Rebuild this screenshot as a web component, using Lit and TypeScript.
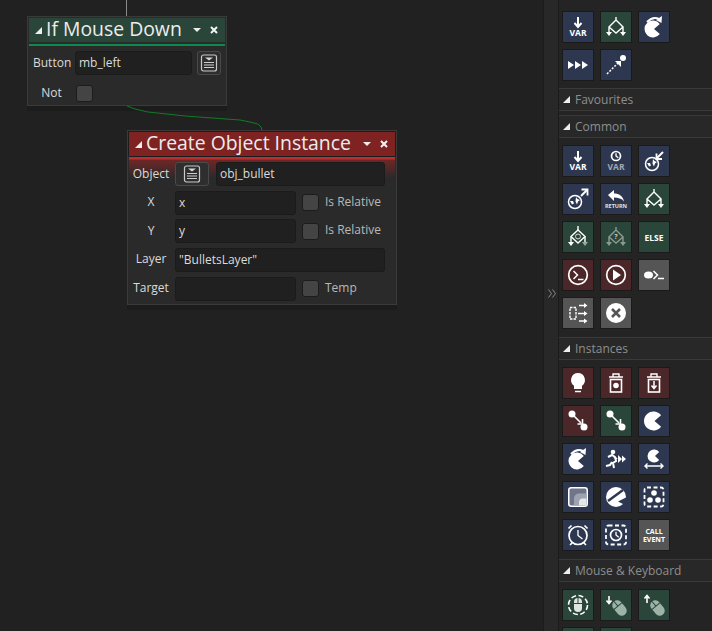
import { LitElement, html, css, svg } from "lit";
import { customElement } from "lit/decorators.js";

type Tone = "blue" | "green" | "red" | "grey";
type Tool = { tone: Tone; icon: any };

const W = "#fff";
const FONT = "Open Sans, sans-serif";

const fork = (c = W) => svg`
  <path d="M15 5v3M15 8l7 7-7 6-7-6zM8 15v5M22 15v5" fill="none" stroke="${c}" stroke-width="1.4"/>
  <path d="M5 20h6l-3 4zM19 20h6l-3 4z" fill="${c}"/>`;
const pac = (cx = 15, cy = 16, r = 9) => svg`
  <path d="M${cx + r * 0.8} ${cy - r * 0.6}A${r} ${r} 0 1 0 ${cx + r * 0.8} ${cy + r * 0.6}L${cx + 1} ${cy}z" fill="${W}"/>`;
const curved = svg`<path d="M8 10q6-6 12-3" fill="none" stroke="${W}" stroke-width="2"/><path d="M23 4l-.5 7-5.500-3z" fill="${W}"/>`;
const globe = (cx: number, cy: number) => svg`
  <circle cx="${cx}" cy="${cy}" r="6.500" fill="none" stroke="${W}" stroke-width="1.500"/>
  <path d="M${cx - 5} ${cy - 1}l3 0 1 2.500-2 1zM${cx + 1} ${cy - 5}l1.500 2 2.500 1-2 1.500-1 3-1.500-3z" fill="${W}"/>`;
const clock = (cx: number, cy: number, r: number) => svg`
  <circle cx="${cx}" cy="${cy}" r="${r}" fill="none" stroke="${W}" stroke-width="1.700"/>
  <path d="M${cx} ${cy - r * 0.6}V${cy}l${r * 0.5} ${r * 0.4}" fill="none" stroke="${W}" stroke-width="1.300"/>`;
const dots = svg`<circle cx="9" cy="8" r="3.500" fill="${W}"/><circle cx="21" cy="21" r="3.500" fill="${W}"/><path d="M11 10l7 7" stroke="${W}" stroke-width="1.600"/><path d="M19.500 13v5h-5" fill="none" stroke="${W}" stroke-width="1.600"/>`;
const label = (t: string, y: number, size: number, c = W) =>
  svg`<text x="15" y="${y}" text-anchor="middle" font-family="${FONT}" font-size="${size}" font-weight="700" fill="${c}">${t}</text>`;
const bin = (inner: any) => svg`
  <path d="M8 9h14M12 8.500V6h6v2.500" fill="none" stroke="${W}" stroke-width="1.400"/>
  <rect x="9.500" y="11.500" width="11" height="12.500" fill="none" stroke="${W}" stroke-width="1.600"/>${inner}`;
const mouse = (up: boolean) => svg`
  <path d="${up ? "M8 13V6M5.500 8.500L8 5.500l2.500 3" : "M8 6v7M5.500 10.500L8 13.500l2.500-3"}" fill="none" stroke="${W}" stroke-width="1.600"/>
  <g transform="rotate(-40 18.500 18)"><rect x="13.500" y="9.500" width="10" height="17" rx="5" fill="#9db3a8"/><path d="M13.500 15.500h10M18.500 9.500v6" stroke="#2a4539" stroke-width="1"/></g>`;

const varTool: Tool = {
  tone: "blue",
  icon: svg`<path d="M15 5v9M11.500 11l3.500 4 3.500-4" fill="none" stroke="${W}" stroke-width="2"/>${label("VAR", 24, 8.5)}`,
};
const swing: Tool = { tone: "blue", icon: svg`${curved}${pac(14, 17, 8.5)}` };

const top: Tool[] = [
  varTool,
  { tone: "green", icon: fork() },
  swing,
  { tone: "blue", icon: svg`<path d="M5 11l6 4-6 4zM12 11l6 4-6 4zM19 11l6 4-6 4z" fill="${W}"/>` },
  { tone: "blue", icon: svg`<path d="M6 24l11-11" stroke="${W}" stroke-width="1.500" stroke-dasharray="2 1.500"/><path d="M14 11h6v6z" fill="${W}"/><circle cx="22" cy="8" r="3" fill="${W}"/>` },
];

const common: Tool[] = [
  varTool,
  { tone: "blue", icon: svg`${clock(15, 10, 4.5)}${label("VAR", 24, 8.5, "#a2a8b2")}` },
  { tone: "blue", icon: svg`${globe(13, 18)}<path d="M24 6l-6 6" stroke="${W}" stroke-width="2"/><path d="M17.500 7.500v5.500h5.500" fill="none" stroke="${W}" stroke-width="1.800"/>` },
  { tone: "blue", icon: svg`${globe(12, 18)}<path d="M18 12l6-6" stroke="${W}" stroke-width="2"/><path d="M18.500 5.500h6v6" fill="none" stroke="${W}" stroke-width="1.800"/>` },
  { tone: "blue", icon: svg`<path d="M7 11l6-5v3.500c5 0 9 2.500 10 8-2-3-6-4-10-4V17z" fill="${W}"/>${label("RETURN", 24, 5.5, "#dfe2e8")}` },
  { tone: "green", icon: fork() },
  { tone: "green", icon: svg`<path d="M15 4v4M8 15v5M22 15v5" fill="none" stroke="${W}" stroke-width="1.400"/><path d="M15 8l7 6.500-7 6.500-7-6.500z" fill="none" stroke="${W}" stroke-width="1.400"/><circle cx="15" cy="14.500" r="2.500" fill="none" stroke="#cfd8d3"/><path d="M5 20h6l-3 4z" fill="${W}"/><path d="M19 20h6l-3 4z" fill="#9aa8a0"/>` },
  { tone: "green", icon: svg`${fork("#8a9a91")}${label("?", 17, 7, "#c4cdc8")}` },
  { tone: "green", icon: label("ELSE", 19, 8.5) },
  { tone: "red", icon: svg`<circle cx="15" cy="15" r="9.300" fill="none" stroke="${W}" stroke-width="1.700"/><path d="M10.500 11l4 4-4 4M15 19.500h5.500" fill="none" stroke="${W}" stroke-width="1.500"/>` },
  { tone: "red", icon: svg`<circle cx="15" cy="15" r="9.300" fill="none" stroke="${W}" stroke-width="1.700"/><path d="M12 9.500l8 5.500-8 5.500z" fill="${W}"/>` },
  { tone: "grey", icon: svg`<ellipse cx="9.500" cy="15" rx="4.500" ry="3.500" fill="${W}"/><path d="M14.500 11l4 4-4 4" fill="none" stroke="${W}" stroke-width="1.500"/><path d="M19 18.500h6" stroke="${W}" stroke-width="1.500"/>` },
  { tone: "grey", icon: svg`<path d="M7 9.500h6v11.500H7z" fill="none" stroke="${W}" stroke-width="1.400" stroke-dasharray="2.500 1"/><path d="M16 7.500h6M15 15.500h7M16 23h6" fill="none" stroke="${W}" stroke-width="1.400"/><path d="M21 5l3.500 2.500L21 10zM21 13l3.500 2.500L21 18zM21 20.500l3.500 2.500-3.500 2.500z" fill="${W}"/>` },
  { tone: "grey", icon: svg`<circle cx="15" cy="15" r="10" fill="${W}"/><path d="M11 11l8 8M19 11l-8 8" stroke="#555" stroke-width="2.500"/>` },
];

const instances: Tool[] = [
  { tone: "red", icon: svg`<path d="M15 5a7 7 0 0 0-4 12.700V21h8v-3.300A7 7 0 0 0 15 5z" fill="${W}"/><path d="M12 23.500h6" stroke="${W}" stroke-width="1.500"/>` },
  { tone: "red", icon: bin(svg`<circle cx="15" cy="17.500" r="2.800" fill="${W}"/>`) },
  { tone: "red", icon: bin(svg`<path d="M15 13v7M12.500 17.500l2.500 3 2.500-3" fill="none" stroke="${W}" stroke-width="1.500"/>`) },
  { tone: "red", icon: dots },
  { tone: "green", icon: dots },
  { tone: "blue", icon: pac(14.5, 15, 9.5) },
  swing,
  { tone: "blue", icon: svg`<circle cx="12" cy="8" r="2.300" fill="${W}"/><path d="M7 13l4-2 3 2 1 4-3 2 1 5M11 18l-2 3-4 1M13 13l3 2" fill="none" stroke="${W}" stroke-width="2"/><path d="M17 11l4 4-4 4zM21 11.500l4 3.500-4 3.500z" fill="${W}"/>` },
  { tone: "blue", icon: svg`${pac(15, 12, 6.5)}<path d="M6 22h18M8.500 19.500L6 22l2.500 2.500M21.500 19.500L24 22l-2.500 2.500" fill="none" stroke="${W}" stroke-width="1.400"/>` },
  { tone: "blue", icon: svg`<rect x="5.750" y="5.750" width="18.500" height="18.500" rx="2.500" fill="#6f7689" stroke="${W}" stroke-width="1.500"/><path d="M11 23.500v-7a5 5 0 0 1 5-5h7.500v12z" fill="#9ea3b0"/><path d="M16 23.500v-3a4 4 0 0 1 4-4h3.500v7z" fill="#e4e6ea"/>` },
  { tone: "blue", icon: svg`<circle cx="15" cy="15" r="10" fill="${W}"/><path d="M7 19L22 8" stroke="#2d3850" stroke-width="2.500"/><path d="M17 19.500l9-4.500v9z" fill="#2d3850"/>` },
  { tone: "blue", icon: svg`<rect x="5.500" y="5.500" width="19" height="19" rx="2.500" fill="none" stroke="${W}" stroke-width="1.800" stroke-dasharray="4 2.500"/><circle cx="15" cy="11" r="2.800" fill="${W}"/><circle cx="11" cy="18" r="2.800" fill="${W}"/><circle cx="19" cy="18" r="2.800" fill="${W}"/>` },
  { tone: "blue", icon: svg`${clock(15, 15.5, 9)}<path d="M5.500 8.500l3-3M24.500 8.500l-3-3M7 25l2.500-2.500M23 25l-2.500-2.500" stroke="${W}" stroke-width="1.700"/>` },
  { tone: "blue", icon: svg`<rect x="5" y="5.500" width="20" height="19" rx="2.500" fill="none" stroke="${W}" stroke-width="1.800" stroke-dasharray="4 2.500"/>${clock(15, 15, 5.5)}` },
  { tone: "grey", icon: svg`${label("CALL", 14, 7)}${label("EVENT", 21.5, 7)}` },
];

const mouseKeys: Tool[] = [
  { tone: "green", icon: svg`<circle cx="15" cy="15" r="9.500" fill="none" stroke="${W}" stroke-width="1.600" stroke-dasharray="5 2.500"/><rect x="11" y="8" width="8" height="14" rx="4" fill="#dfe5e2"/><path d="M11 13.500h8M15 8v5.500" stroke="#2a4539"/>` },
  { tone: "green", icon: mouse(false) },
  { tone: "green", icon: mouse(true) },
  { tone: "green", icon: svg`` },
  { tone: "green", icon: svg`` },
];

const listIcon = svg`
  <rect x="2.500" y="2" width="15" height="16" rx="2" fill="none" stroke="#c9c9c9" stroke-width="1.200"/>
  <path d="M6 4.500h8l-4 3z" fill="#d8d8d8"/>
  <path d="M5 9.500h10M5 12h10M5 14.500h10" stroke="#d0d0d0" stroke-width="1.200"/>`;

@customElement("app-root")
export class AppRoot extends LitElement {
  static styles = css`
    :host {
      display: flex;
      width: 712px;
      height: 631px;
      overflow: hidden;
      background: #212121;
      font-family: "Open Sans", sans-serif;
    }
    .canvas {
      position: relative;
      flex: 1;
    }
    .wires {
      position: absolute;
      inset: 0;
      width: 100%;
      height: 100%;
      pointer-events: none;
    }
    .node {
      position: absolute;
      box-sizing: border-box;
      background: #2a2a2a;
      border: 1px solid #3a3a3a;
      box-shadow: 0 5px 0 #1c1c1c;
      color: #d8d8d8;
      font-size: 12px;
    }
    .node.mouse {
      left: 27px;
      top: 16px;
      width: 200px;
      height: 90px;
    }
    .node.create {
      left: 127px;
      top: 130px;
      width: 270px;
      height: 175px;
    }
    .head {
      display: flex;
      align-items: center;
      height: 24px;
      margin: 1px 1px 0;
      padding-left: 6px;
      color: #ececec;
      font-size: 19.4px;
      white-space: nowrap;
    }
    .mouse .head {
      background: #2a4539;
    }
    .create .head {
      box-sizing: border-box;
      height: 25px;
      margin: 0;
      padding-left: 6px;
      background: #7f2222;
      border: 1px solid #1c1c1c;
      border-bottom: 0;
    }
    .bar {
      height: 2px;
      margin: 2px 1px 0;
      background: #0d8a4e;
    }
    .create .bar {
      height: 22px;
      margin: 0 1px -21px;
      background: linear-gradient(#1c1c1c 0, #1c1c1c 1px, #b83030 1px, #b83030 3px, #6f2626 4px, #2a2a2a 100%);
    }
    .tri {
      width: 0;
      height: 0;
      margin-right: 5px;
      border-left: 7px solid transparent;
      border-bottom: 7px solid #eee;
    }
    .head .tri {
      margin-right: 4px;
    }
    .title {
      flex: 1;
      margin-top: -3px;
    }
    .menu {
      width: 0;
      height: 0;
      margin-right: 9px;
      border: 4.5px solid transparent;
      border-top: 4px solid #eee;
      border-bottom: 0;
    }
    .close {
      display: block;
      margin-right: 7px;
    }
    .form {
      position: relative;
      display: grid;
      grid-auto-rows: 24px;
      align-items: center;
    }
    .mouse .form {
      grid-template-columns: 37px 117px 24px;
      column-gap: 5px;
      row-gap: 6px;
      padding: 5px 0 0 5px;
    }
    .create .form {
      grid-template-columns: 38px 121px 84px;
      column-gap: 5px;
      row-gap: 4.67px;
      padding: 5px 0 0 4px;
    }
    .label {
      margin-top: -2px;
      text-align: center;
      color: #dadada;
    }
    .input {
      box-sizing: border-box;
      height: 24px;
      line-height: 22px;
      padding-left: 3px;
      background: #202020;
      border: 1px solid #1b1b1b;
      border-radius: 3px;
      color: #dcdcdc;
    }
    .wide {
      grid-column: span 2;
    }
    .objrow {
      display: grid;
      grid-template-columns: 34px 1fr;
      gap: 7px;
    }
    .pick {
      box-sizing: border-box;
      display: flex;
      align-items: center;
      justify-content: center;
      height: 24px;
      background: #2e2e2e;
      border: 1px solid #4a4a4a;
      border-radius: 3px;
    }
    .check {
      display: flex;
      align-items: center;
      gap: 6px;
      color: #b8b8b8;
    }
    .check span:last-child {
      margin-top: -3px;
    }
    .box {
      box-sizing: border-box;
      flex: none;
      width: 17px;
      height: 17px;
      margin-left: 1px;
      background: #444;
      border: 1px solid #1c1c1c;
      border-radius: 3px;
    }
    .side {
      display: flex;
      flex: none;
      width: 169px;
    }
    .grip {
      box-sizing: border-box;
      flex: none;
      width: 16px;
      padding: 289px 0 0 4px;
      background: #282828;
      border-left: 1px solid #1b1b1b;
      border-right: 1px solid #1b1b1b;
    }
    .grip svg {
      display: block;
    }
    .panel {
      flex: 1;
      min-width: 0;
      background: #242424;
    }
    .tools {
      display: grid;
      grid-template-columns: repeat(3, 30px);
      gap: 8px;
      padding: 8px 4px 9px;
    }
    .tools.first {
      padding-top: 12px;
      padding-bottom: 8px;
    }
    .section {
      display: flex;
      align-items: center;
      height: 21px;
      padding-left: 4px;
      border-top: 1px solid #3a3a3a;
      border-bottom: 1px solid #3a3a3a;
      background: #282828;
      color: #8e8e8e;
      font-size: 12px;
    }
    .gap {
      height: 4px;
    }
    .tool {
      width: 30px;
      height: 30px;
      box-shadow: 0 0 0 1px #1a1a1a;
    }
    .tool svg {
      display: block;
      width: 30px;
      height: 30px;
    }
    .blue {
      background: #2d3850;
    }
    .green {
      background: #2a4539;
    }
    .red {
      background: #4c2729;
    }
    .grey {
      background: #555;
    }
  `;

  private tools(list: Tool[], first = false) {
    return html`<div class="tools ${first ? "first" : ""}">
      ${list.map(
        (t) => html`<div class="tool ${t.tone}"><svg viewBox="0 0 30 30">${t.icon}</svg></div>`
      )}
    </div>`;
  }

  private section(name: string) {
    return html`<div class="section"><span class="tri"></span>${name}</div>`;
  }

  private head(title: string) {
    return html`<div class="head">
      <span class="tri"></span><span class="title">${title}</span>
      <span class="menu"></span>
      <svg class="close" width="8" height="8" viewBox="0 0 8 8"><path d="M1 1l6 6M7 1L1 7" stroke="#f4f4f4" stroke-width="2"/></svg>
    </div>`;
  }

  private pick() {
    return html`<div class="pick"><svg width="20" height="20" viewBox="0 0 20 20">${listIcon}</svg></div>`;
  }

  private check(text: string) {
    return html`<div class="check"><span class="box"></span><span>${text}</span></div>`;
  }

  render() {
    return html`
      <div class="canvas">
        <div class="node mouse">
          ${this.head("If Mouse Down")}
          <div class="bar"></div>
          <div class="form">
            <span class="label">Button</span>
            <div class="input">mb_left</div>
            ${this.pick()}
            <span class="label">Not</span>
            <div class="box"></div>
          </div>
        </div>
        <div class="node create">
          ${this.head("Create Object Instance")}
          <div class="bar"></div>
          <div class="form">
            <span class="label">Object</span>
            <div class="objrow wide">
              ${this.pick()}
              <div class="input">obj_bullet</div>
            </div>
            <span class="label">X</span>
            <div class="input">x</div>
            ${this.check("Is Relative")}
            <span class="label">Y</span>
            <div class="input">y</div>
            ${this.check("Is Relative")}
            <span class="label">Layer</span>
            <div class="input wide">"BulletsLayer"</div>
            <span class="label">Target</span>
            <div class="input"></div>
            ${this.check("Temp")}
          </div>
        </div>
        <svg class="wires" viewBox="0 0 543 631">
          <path d="M126.500 0v16" stroke="#8a8a8a" fill="none"/>
          <path d="M127 106l8 3 13 3 37 4 55 4 10 2 8 2 3 3 1 3" stroke="#137a25" fill="none"/>
        </svg>
      </div>
      <div class="side">
        <div class="grip">
          <svg width="8" height="9" viewBox="0 0 8 9"><path d="M.5.5l3 4-3 4M4.500.5l3 4-3 4" fill="none" stroke="#888"/></svg>
        </div>
        <div class="panel">
          ${this.tools(top, true)}
          ${this.section("Favourites")}
          <div class="gap"></div>
          ${this.section("Common")}
          ${this.tools(common)}
          ${this.section("Instances")}
          ${this.tools(instances)}
          ${this.section("Mouse & Keyboard")}
          ${this.tools(mouseKeys)}
        </div>
      </div>
    `;
  }
}
